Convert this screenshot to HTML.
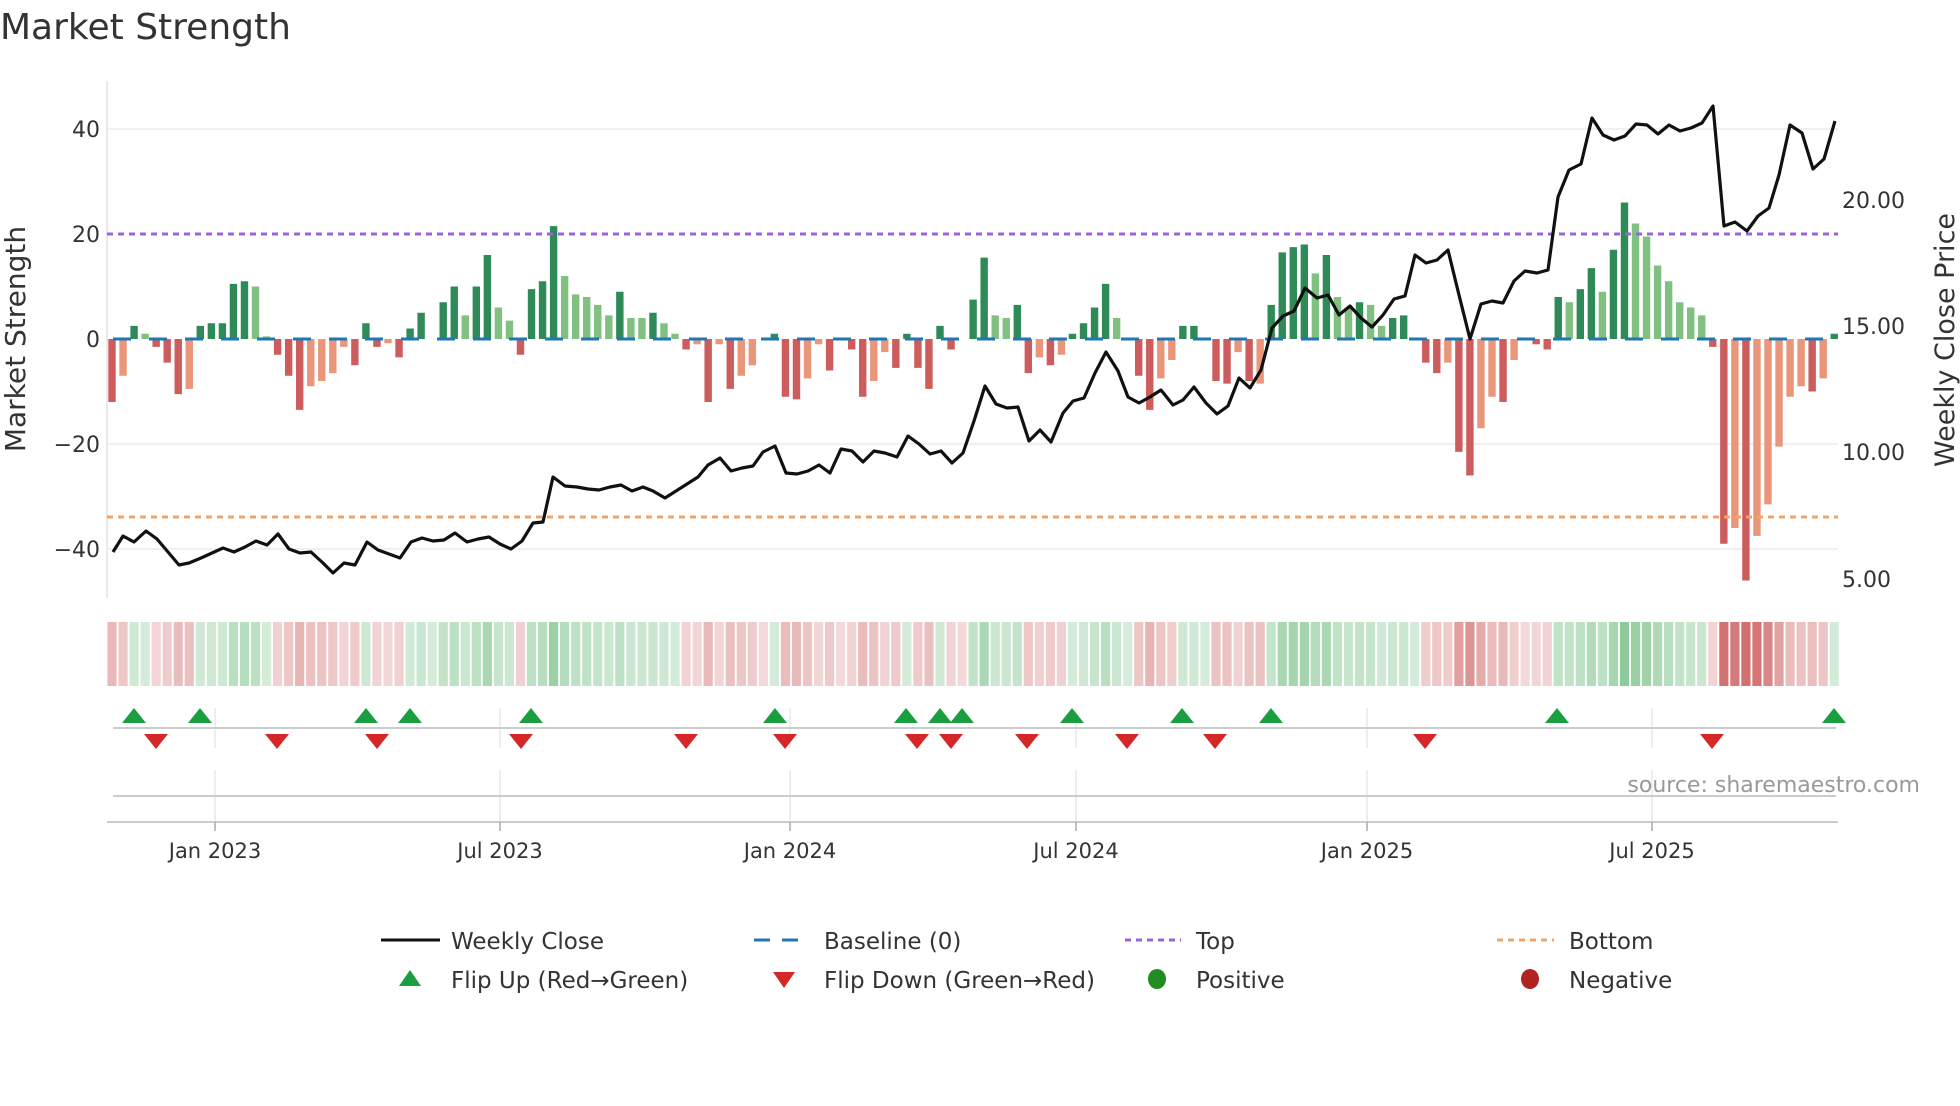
<!DOCTYPE html>
<html><head><meta charset="utf-8">
<style>
html,body{margin:0;padding:0;background:#fff;}
body{width:1960px;height:1102px;overflow:hidden;font-family:"DejaVu Sans","Liberation Sans",sans-serif;}
svg text{font-family:"DejaVu Sans","Liberation Sans",sans-serif;}
</style></head>
<body>
<svg id="c" width="1960" height="1102" xmlns="http://www.w3.org/2000/svg">
<text x="0" y="39" font-size="36" fill="#333">Market Strength</text>
<g stroke="#ececec" stroke-width="1.5">
<line x1="107" y1="129" x2="1838" y2="129"/>
<line x1="107" y1="444" x2="1838" y2="444"/>
<line x1="107" y1="549" x2="1838" y2="549"/>
</g>
<line x1="107" y1="81" x2="107" y2="598" stroke="#e4e4e4" stroke-width="1.5"/>
<g font-size="22" fill="#333" text-anchor="end">
<text x="100" y="137">40</text>
<text x="100" y="242">20</text>
<text x="100" y="347">0</text>
<text x="100" y="452">−20</text>
<text x="100" y="557">−40</text>
</g>
<g font-size="22" fill="#333">
<text x="1842" y="208">20.00</text>
<text x="1842" y="334">15.00</text>
<text x="1842" y="460">10.00</text>
<text x="1842" y="587">5.00</text>
</g>
<text transform="translate(25,339) rotate(-90)" font-size="28" fill="#333" text-anchor="middle">Market Strength</text>
<text transform="translate(1954,340) rotate(-90)" font-size="27" fill="#333" text-anchor="middle">Weekly Close Price</text>
<g id="bars"></g>
<line x1="113" y1="339" x2="1838" y2="339" stroke="#1f77b4" stroke-width="3" stroke-dasharray="18 18"/>
<line x1="107" y1="234" x2="1838" y2="234" stroke="#9b64dc" stroke-width="3" stroke-dasharray="6 5"/>
<line x1="107" y1="517" x2="1838" y2="517" stroke="#f0a468" stroke-width="3" stroke-dasharray="6 5"/>
<polyline id="price" fill="none" stroke="#111" stroke-width="3.2" stroke-linejoin="round"/>
<g id="band"></g>
<g stroke="#e8e8e8" stroke-width="1.5">
<line x1="215" y1="708" x2="215" y2="748"/><line x1="500" y1="708" x2="500" y2="748"/><line x1="790" y1="708" x2="790" y2="748"/><line x1="1076" y1="708" x2="1076" y2="748"/><line x1="1367" y1="708" x2="1367" y2="748"/><line x1="1652" y1="708" x2="1652" y2="748"/>
<line x1="215" y1="770" x2="215" y2="822"/><line x1="500" y1="770" x2="500" y2="822"/><line x1="790" y1="770" x2="790" y2="822"/><line x1="1076" y1="770" x2="1076" y2="822"/><line x1="1367" y1="770" x2="1367" y2="822"/><line x1="1652" y1="770" x2="1652" y2="822"/>
</g>
<line x1="113" y1="728" x2="1836" y2="728" stroke="#ccc" stroke-width="2"/>
<line x1="113" y1="796" x2="1836" y2="796" stroke="#ccc" stroke-width="2"/>
<line x1="107" y1="822" x2="1838" y2="822" stroke="#ccc" stroke-width="2"/>
<g stroke="#aaa" stroke-width="1.5">
<line x1="215" y1="822" x2="215" y2="831"/><line x1="500" y1="822" x2="500" y2="831"/><line x1="790" y1="822" x2="790" y2="831"/><line x1="1076" y1="822" x2="1076" y2="831"/><line x1="1367" y1="822" x2="1367" y2="831"/><line x1="1652" y1="822" x2="1652" y2="831"/>
</g>
<g id="marks"></g>
<text x="1920" y="792" font-size="22" fill="#999" text-anchor="end">source: sharemaestro.com</text>
<g font-size="21" fill="#333" text-anchor="middle">
<text x="215" y="858">Jan 2023</text>
<text x="500" y="858">Jul 2023</text>
<text x="790" y="858">Jan 2024</text>
<text x="1076" y="858">Jul 2024</text>
<text x="1367" y="858">Jan 2025</text>
<text x="1652" y="858">Jul 2025</text>
</g>
<g font-size="23" fill="#333">
<line x1="381" y1="940" x2="440" y2="940" stroke="#111" stroke-width="3"/>
<text x="451" y="949">Weekly Close</text>
<line x1="754" y1="940" x2="806" y2="940" stroke="#1f77b4" stroke-width="3" stroke-dasharray="16 12"/>
<text x="824" y="949">Baseline (0)</text>
<line x1="1125" y1="940" x2="1181" y2="940" stroke="#9b64dc" stroke-width="3" stroke-dasharray="6 5"/>
<text x="1196" y="949">Top</text>
<line x1="1497" y1="940" x2="1554" y2="940" stroke="#f0a468" stroke-width="3" stroke-dasharray="6 5"/>
<text x="1569" y="949">Bottom</text>
<polygon points="399,986 421,986 410,970" fill="#1a9e3f"/>
<text x="451" y="988">Flip Up (Red→Green)</text>
<polygon points="773,972 795,972 784,988" fill="#d62728"/>
<text x="824" y="988">Flip Down (Green→Red)</text>
<ellipse cx="1157" cy="979" rx="9" ry="10" fill="#228b22"/>
<text x="1196" y="988">Positive</text>
<ellipse cx="1530" cy="979" rx="9" ry="10" fill="#b22222"/>
<text x="1569" y="988">Negative</text>
</g>
</svg>
<script>
var NS="http://www.w3.org/2000/svg";
var data="-12D,-7L,2.5D,1L,-1.5D,-4.5D,-10.5D,-9.5L,2.5D,3D,3D,10.5D,11D,10L,0.5L,-3D,-7D,-13.5D,-9L,-8L,-6.5L,-1.5L,-5D,3D,-1.5D,-0.8L,-3.5D,2D,5D,0D,7D,10D,4.5L,10D,16D,6L,3.5L,-3D,9.5D,11D,21.5D,12L,8.5L,8L,6.5L,4.5L,9D,4L,4L,5D,3L,1L,-2D,-1L,-12D,-1L,-9.5D,-7L,-5L,0D,1D,-11D,-11.5D,-7.5L,-1L,-6D,0D,-2D,-11D,-8L,-2.5L,-5.5D,1D,-5.5D,-9.5D,2.5D,-2D,0D,7.5D,15.5D,4.5L,4L,6.5D,-6.5D,-3.5L,-5D,-3L,1D,3D,6D,10.5D,4L,0D,-7D,-13.5D,-7.5L,-4L,2.5D,2.5D,0D,-8D,-8.5D,-2.5L,-8D,-8.5L,6.5D,16.5D,17.5D,18D,12.5L,16D,8L,6L,7D,6.5L,2.5L,4D,4.5D,0D,-4.5D,-6.5D,-4.5L,-21.5D,-26D,-17L,-11L,-12D,-4L,0D,-1D,-2D,8D,7L,9.5D,13.5D,9L,17D,26D,22L,19.5L,14L,11L,7L,6L,4.5L,-1.5D,-39D,-36L,-46D,-37.5L,-31.5L,-20.5L,-11L,-9L,-10D,-7.5L,1D".split(",");
var bars=document.getElementById("bars"),band=document.getElementById("band");
var last=-1;
data.forEach(function(s,i){
  var v=parseFloat(s),t=s.slice(-1),x=112+i*11.04;
  if(v!==0){
    var r=document.createElementNS(NS,"rect");
    var y0=339,y1=339-5.25*v;
    r.setAttribute("x",x-3.7);r.setAttribute("width",7.4);
    r.setAttribute("y",Math.min(y0,y1));r.setAttribute("height",Math.abs(y1-y0));
    var col=v>0?(t=="D"?"#2e8b57":"#80c080"):(t=="D"?"#cd5c5c":"#e9967a");
    r.setAttribute("fill",col);bars.appendChild(r);
    last=v>0?1:-1;
  }
  var a=0.22+0.6*Math.min(Math.abs(v)/40,1);
  var b=document.createElementNS(NS,"rect");
  b.setAttribute("x",x-4.6);b.setAttribute("width",9.2);b.setAttribute("y",622);b.setAttribute("height",64);
  b.setAttribute("fill",(v>0||(v===0&&last>0))?"rgba(70,170,90,"+a+")":"rgba(200,80,80,"+a+")");
  band.appendChild(b);
});
var pts="113,552 123,536 134,542 146,531 157,539 168,552 179,565 189,563 201,558 212,553 223,548 234,552 245,547 256,541 267,545 278,534 289,549 300,553 311,552 323,563 333,573 344,563 355,565 367,542 378,550 389,554 400,558 411,542 422,538 433,541 444,540 455,533 467,542 478,539 489,537 500,544 511,549 522,541 533,523 543,522 553,477 565,486 577,487 588,489 599,490 610,487 621,485 632,491 643,487 653,491 665,498 676,491 687,484 698,477 708,465 720,458 731,471 742,468 753,466 763,452 775,446 786,473 797,474 808,471 819,465 830,473 841,449 852,451 863,462 874,451 885,453 897,457 908,436 919,444 930,454 941,451 952,463 963,453 974,421 985,386 996,404 1007,408 1018,407 1029,441 1040,430 1051,442 1063,413 1073,401 1084,398 1095,373 1106,352 1118,371 1128,397 1139,403 1150,397 1161,390 1173,405 1183,400 1194,387 1206,403 1217,414 1228,406 1239,378 1250,388 1261,370 1272,328 1283,316 1294,311 1305,288 1317,298 1328,295 1339,315 1350,306 1361,318 1372,327 1383,315 1394,299 1405,296 1415,255 1426,263 1437,260 1448,250 1459,295 1470,339 1481,304 1492,301 1503,303 1514,281 1525,271 1537,273 1548,270 1558,197 1569,170 1581,164 1592,118 1603,135 1614,140 1625,136 1636,124 1647,125 1658,134 1669,125 1680,131 1691,128 1702,123 1713,106 1724,226 1735,222 1747,231 1758,216 1769,208 1779,175 1790,125 1802,133 1813,169 1824,159 1835,121";
document.getElementById("price").setAttribute("points",pts);
var mk=document.getElementById("marks");
[134,200,366,410,531,775,906,940,962,1072,1182,1271,1557,1834].forEach(function(x){
  var p=document.createElementNS(NS,"polygon");
  p.setAttribute("points",(x-12)+",723 "+(x+12)+",723 "+x+",708");p.setAttribute("fill","#1a9e3f");mk.appendChild(p);
});
[156,277,377,521,686,785,917,951,1027,1127,1215,1425,1712].forEach(function(x){
  var p=document.createElementNS(NS,"polygon");
  p.setAttribute("points",(x-12)+",734 "+(x+12)+",734 "+x+",749");p.setAttribute("fill","#d62728");mk.appendChild(p);
});
</script>
</body></html>
